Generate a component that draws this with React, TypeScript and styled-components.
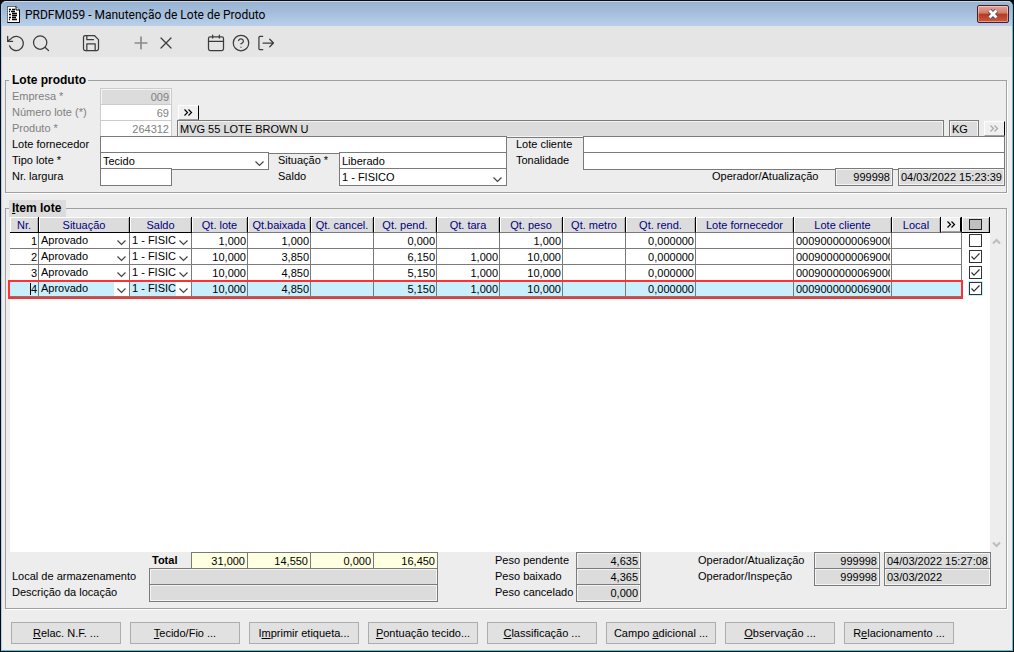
import React from "react";
import styled, { createGlobalStyle, css } from "styled-components";

const GlobalStyle = createGlobalStyle`
  * { box-sizing: border-box; }
  html, body { margin: 0; padding: 0; }
  body, button, input, select, table {
    font-family: "Liberation Sans", Arial, sans-serif;
    font-size: 11px;
    line-height: 14px;
    color: #000;
  }
`;

/* ---------- window frame ---------- */

const Frame = styled.div`
  min-height: 100vh;
  display: flex;
  background: #0a0a0a;
  padding: 1px;
`;

const Window = styled.main`
  flex: 1;
  min-width: 0;
  display: flex;
  flex-direction: column;
  background: #ededed;
  border: 1px solid #4cc4e6;
  border-left-color: #a9cdf0;
  border-top-color: #c8d8ea;
  border-radius: 5px 5px 0 0;
  overflow: hidden;
`;

const TitleBar = styled.header`
  height: 24px;
  display: flex;
  align-items: center;
  padding: 0 3px 0 5px;
  background: linear-gradient(#99b4d1, #a3bcda 40%, #b9d1ea);
`;

const Title = styled.h1`
  flex: 1;
  margin: 0 0 0 5px;
  padding-top: 2px;
  font: 400 12px/16px Roboto, "Segoe UI", sans-serif;
`;

const CloseButton = styled.button`
  width: 32px;
  height: 18px;
  padding: 0;
  display: flex;
  align-items: center;
  justify-content: center;
  border: 1px solid #4a1d22;
  border-radius: 2px;
  background: linear-gradient(#e3a396, #d07a6b 45%, #b9371f 50%, #cb5a43);
  box-shadow: inset 0 0 0 1px rgba(255, 255, 255, 0.4);
`;

const Toolbar = styled.div`
  height: 31px;
  display: flex;
  align-items: flex-start;
  padding: 4px 0 0 1px;
  background: #e5e5e5;
`;

const ToolButton = styled.button<{ $gapBefore?: boolean; $dim?: boolean }>`
  width: 25px;
  height: 26px;
  margin-left: ${(p) => (p.$gapBefore ? 25 : 0)}px;
  padding: 0 0 0 3px;
  border: 0;
  background: none;
  color: ${(p) => (p.$dim ? "#8a8a8a" : "#3c3c3c")};
  display: flex;
  align-items: center;
`;

const ToolIcon: React.FC<{ children: React.ReactNode }> = ({ children }) => (
  <svg width="20" height="20" viewBox="0 0 24 24" fill="none" stroke="currentColor" strokeWidth="1.5" strokeLinecap="round" strokeLinejoin="round" aria-hidden="true">
    {children}
  </svg>
);

const Body = styled.div`
  flex: 1;
  display: flex;
  flex-direction: column;
  padding: 15px 5px 6px 3px;
`;

/* ---------- groups and form parts ---------- */

const Group = styled.fieldset<{ $grow?: boolean }>`
  min-width: 0;
  margin: 0 0 7px;
  padding: 0 1px 8px 6px;
  border: 1px solid #a0a0a0;
  box-shadow: 1px 1px 0 #fff;
  ${(p) =>
    p.$grow &&
    css`
      flex: 1;
      display: flex;
      flex-direction: column;
      margin-bottom: 13px;
      padding: 0 4px 8px 4px;
    `}
`;

const Legend = styled.legend<{ $shaded?: boolean }>`
  height: ${(p) => (p.$shaded ? 17 : 16)}px;
  margin-left: ${(p) => (p.$shaded ? -1 : -3)}px;
  padding: 0 ${(p) => (p.$shaded ? 5 : 2)}px 0 3px;
  font-size: 12px;
  line-height: 16px;
  font-weight: 700;
  background: ${(p) => (p.$shaded ? "#dcdcdc" : "#ededed")};
`;

const Row = styled.div<{ $gap?: number }>`
  height: 16px;
  display: flex;
  align-items: flex-start;
  gap: ${(p) => p.$gap || 0}px;
`;

const Label = styled.label<{ $w: number; $indent?: number; $dim?: boolean; $bold?: boolean }>`
  flex: none;
  width: ${(p) => p.$w}px;
  padding-left: ${(p) => p.$indent || 0}px;
  line-height: 16px;
  white-space: nowrap;
  color: ${(p) => (p.$dim ? "#808080" : "#000")};
  font-weight: ${(p) => (p.$bold ? 700 : 400)};
`;

type Tone = "edit" | "read" | "total" | "off" | "offRead";

const tones: Record<Tone, string> = {
  edit: "background:#fff;border-color:#7a7a7a;",
  read: "background:#dcdcdc;border-color:#7a7a7a;box-shadow:inset 0 0 0 1px #f4f4f4;",
  total: "background:#ffffe1;border-color:#7a7a7a;",
  off: "background:#fff;border-color:#cccccc;color:#808080;",
  offRead: "background:#dcdcdc;border-color:#cccccc;color:#808080;box-shadow:inset 0 0 0 1px #f4f4f4;",
};

const Field = styled.input<{ $w?: number; $tone?: Tone; $right?: boolean }>`
  ${(p) => (p.$w ? `flex: none; width: ${p.$w}px;` : "flex: 1; min-width: 0;")}
  height: 18px;
  margin: 0;
  padding: 0 2px;
  border: 1px solid;
  border-radius: 0;
  outline: 0;
  text-align: ${(p) => (p.$right ? "right" : "left")};
  ${(p) => tones[p.$tone || "edit"]}
`;

const Totals = styled.div`
  display: flex;
  input + input {
    margin-left: -1px;
  }
`;

const SelectBox = styled.span<{ $w?: number; $bare?: boolean }>`
  flex: none;
  display: grid;
  grid-template-columns: minmax(0, 1fr) ${(p) => (p.$bare ? 15 : 18)}px;
  width: ${(p) => (p.$w ? p.$w + "px" : "100%")};
  height: ${(p) => (p.$bare ? 15 : 18)}px;
  border: ${(p) => (p.$bare ? "0" : "1px solid #7a7a7a")};
  background: #fff;
`;

const NativeSelect = styled.select<{ $selected?: boolean }>`
  appearance: none;
  grid-area: 1 / 1;
  min-width: 0;
  height: 100%;
  margin: 0;
  padding: 0 0 1px 2px;
  border: 0;
  border-radius: 0;
  outline: 0;
  background: ${(p) => (p.$selected ? "#c9effd" : "#fff")};
  overflow: hidden;
  text-overflow: clip;
`;

const Arrow = styled.svg`
  grid-area: 1 / 2;
  align-self: end;
  justify-self: center;
  margin-bottom: 2px;
  pointer-events: none;
`;

const Chevron = () => (
  <Arrow width="9" height="7" viewBox="0 0 9 7" fill="none" stroke="#444" strokeWidth="1.2" aria-hidden="true">
    <path d="M0.5 1.5 4.5 5.5 8.5 1.5" />
  </Arrow>
);

const Choice: React.FC<{ id?: string; label?: string; value: string; w?: number; bare?: boolean; selected?: boolean }> = (p) => (
  <SelectBox $w={p.w} $bare={p.bare}>
    <NativeSelect id={p.id} aria-label={p.label} $selected={p.selected} defaultValue={p.value}>
      <option>{p.value}</option>
    </NativeSelect>
    <Chevron />
  </SelectBox>
);

const MoreButton = styled.button<{ $flush?: boolean }>`
  flex: none;
  width: ${(p) => (p.$flush ? "100%" : "21px")};
  height: 15px;
  margin-top: ${(p) => (p.$flush ? 0 : 1)}px;
  padding: 0;
  display: flex;
  align-items: center;
  justify-content: center;
  background: #f0f0f0;
  border: 1px solid;
  border-color: #fff #000 #a0a0a0 #fff;
  color: #000;
  &:disabled {
    color: #a8a8a8;
  }
`;

const DoubleChevron = () => (
  <svg width="9" height="7" viewBox="0 0 9 7" fill="none" stroke="currentColor" strokeWidth="1.2" aria-hidden="true">
    <path d="M0.5 0.5 3.5 3.5 0.5 6.5M4.5 0.5 7.5 3.5 4.5 6.5" />
  </svg>
);

const Spacer = styled.span<{ $w?: number }>`
  flex: ${(p) => (p.$w ? `0 0 ${p.$w}px` : "1")};
`;

/* ---------- item grid ---------- */

const GridArea = styled.div`
  flex: 1;
  display: flex;
  min-height: 335px;
`;

const GridPane = styled.div`
  position: relative;
  flex: 1;
  min-width: 0;
  background: linear-gradient(#ededed 16px, #fff 16px);
`;

const Scroll = styled.div`
  width: 12px;
  display: flex;
  flex-direction: column;
  justify-content: space-between;
  align-items: center;
  padding: 21px 0 4px;
`;

const Grid = styled.table`
  width: 100%;
  table-layout: fixed;
  border-collapse: separate;
  border-spacing: 0;
`;

const Head = styled.th<{ $tight?: boolean }>`
  height: 16px;
  padding: 0;
  font-weight: 400;
  line-height: 14px;
  white-space: nowrap;
  color: #000080;
  background: #dcdcdc;
  border-right: 1px solid #000;
  border-bottom: 1px solid ${(p) => (p.$tight ? "#000" : "#7a7a7a")};
  box-shadow: inset 1px 1px 0 #fff, inset -1px 0 0 #b4b4b4;
`;

const Swatch = styled.span`
  display: block;
  width: 13px;
  height: 11px;
  margin: 1px auto;
  border: 1px solid #222;
  background: #c0c0c0;
`;

const Cell = styled.td<{ $selected?: boolean; $left?: boolean; $flush?: boolean }>`
  height: 16px;
  padding: ${(p) => (p.$flush ? "0" : "1px 1px 0 2px")};
  line-height: 14px;
  text-align: ${(p) => (p.$left ? "left" : "right")};
  white-space: nowrap;
  overflow: hidden;
  text-overflow: clip;
  background: ${(p) => (p.$selected ? "#c9effd" : "#fff")};
  border-right: 1px solid #7a7a7a;
  border-bottom: 1px solid #7a7a7a;
  vertical-align: top;
`;

const Clip = styled.div`
  overflow: hidden;
`;

const Caret = styled.span`
  border-left: 1px solid #000;
`;

const CheckCell = styled.td`
  height: 16px;
  padding: 0;
  vertical-align: top;
`;

const CheckBox = styled.label<{ $selected?: boolean }>`
  display: grid;
  width: 13px;
  height: 13px;
  margin: 1px 0 0 7px;
  background: #fff;
  box-shadow: 0 0 0 1px ${(p) => (p.$selected ? "#c9effd" : "#fff")};
  input,
  svg {
    grid-area: 1 / 1;
    margin: 0;
  }
  svg {
    pointer-events: none;
    visibility: hidden;
  }
  input {
    appearance: none;
    width: 13px;
    height: 13px;
    border: 1px solid #333;
  }
  input:checked + svg {
    visibility: visible;
  }
`;

const RowMarker = styled.div`
  position: absolute;
  top: 63px;
  left: -2px;
  right: 27px;
  height: 19px;
  border: 2px solid #fa3232;
  pointer-events: none;
`;

const Summary = styled.div`
  display: flex;
  justify-content: space-between;
  padding: 0 11px 0 2px;
`;

const Actions = styled.div`
  display: flex;
  gap: 9px;
  padding-left: 6px;
`;

const ActionButton = styled.button`
  width: 110px;
  height: 22px;
  padding: 0;
  border: 1px solid #adadad;
  background: #e1e1e1;
  white-space: nowrap;
`;

/* ---------- data ---------- */

type Col = { title: string; w?: number; tight?: boolean };

const columns: Col[] = [
  { title: "Nr.", w: 29, tight: true },
  { title: "Situação", w: 91, tight: true },
  { title: "Saldo", w: 62, tight: true },
  { title: "Qt. lote", w: 56 },
  { title: "Qt.baixada", w: 63 },
  { title: "Qt. cancel.", w: 63 },
  { title: "Qt. pend.", w: 63 },
  { title: "Qt. tara", w: 63 },
  { title: "Qt. peso", w: 63 },
  { title: "Qt. metro", w: 63 },
  { title: "Qt. rend.", w: 70 },
  { title: "Lote fornecedor" },
  { title: "Lote cliente", w: 98 },
  { title: "Local", w: 49 },
];

const items = [
  { nr: 1, q: ["1,000", "1,000", "", "0,000", "", "1,000", "", "0,000000"], on: false },
  { nr: 2, q: ["10,000", "3,850", "", "6,150", "1,000", "10,000", "", "0,000000"], on: true },
  { nr: 3, q: ["10,000", "4,850", "", "5,150", "1,000", "10,000", "", "0,000000"], on: true },
  { nr: 4, q: ["10,000", "4,850", "", "5,150", "1,000", "10,000", "", "0,000000"], on: true },
];
const current = 4;

const totals = [
  { name: "Total Qt. lote", value: "31,000", w: 57 },
  { name: "Total Qt. baixada", value: "14,550", w: 64 },
  { name: "Total Qt. cancel.", value: "0,000", w: 64 },
  { name: "Total Qt. pend.", value: "16,450", w: 65 },
];

const weights = [
  ["Peso pendente", "4,635"],
  ["Peso baixado", "4,365"],
  ["Peso cancelado", "0,000"],
];

const actions = [
  ["", "R", "elac. N.F. ..."],
  ["", "T", "ecido/Fio ..."],
  ["I", "m", "primir etiqueta..."],
  ["", "P", "ontuação tecido..."],
  ["", "C", "lassificação ..."],
  ["Campo ", "a", "dicional ..."],
  ["", "O", "bservação ..."],
  ["R", "e", "lacionamento ..."],
];

export default function App() {
  return (
    <Frame>
      <GlobalStyle />
      <Window>
        <TitleBar>
          <svg width="13" height="17" viewBox="0 0 13 17" aria-hidden="true">
            <path d="M0.5 0.5H9L12.5 4V16.5H0.5Z" fill="#fff" stroke="#000" strokeDasharray="1 1" />
            <path d="M12.500 4V16.500H0.500M9 0.500V4H12.500" fill="none" stroke="#000" />
            <path d="M2 3.500h2M5 3.500h3M2 5.500h1M4 5.500h4M2 8.500h2M5 7.500h5M5 9.500h5M2 11.500h2M5 11.500h4M2 13.500h1M5 13.500h5" stroke="#000" strokeWidth="1.3" />
          </svg>
          <Title>PRDFM059 - Manutenção de Lote de Produto</Title>
          <CloseButton aria-label="Fechar">
            <svg width="12" height="10" viewBox="0 0 12 10" aria-hidden="true">
              <path d="M2.500 1.500 9.500 8.500M9.500 1.500 2.500 8.500" stroke="#4d4d5a" strokeWidth="4.500" />
              <path d="M2.500 1.500 9.500 8.500M9.500 1.500 2.500 8.500" stroke="#fff" strokeWidth="2.800" />
            </svg>
          </CloseButton>
        </TitleBar>

        <Toolbar role="toolbar">
          <ToolButton aria-label="Desfazer">
            <ToolIcon>
              <path d="M2 4v6h6" />
              <path d="M4.300 15.500a8.500 8.500 0 1 0 2-9L2 10" />
            </ToolIcon>
          </ToolButton>
          <ToolButton aria-label="Pesquisar">
            <ToolIcon>
              <circle cx="11" cy="11.500" r="8" />
              <path d="M16.800 17.200 21 21" />
            </ToolIcon>
          </ToolButton>
          <ToolButton aria-label="Salvar" $gapBefore>
            <ToolIcon>
              <path d="M19 21H5a2 2 0 0 1-2-2V5a2 2 0 0 1 2-2h11l5 5v11a2 2 0 0 1-2 2z" />
              <path d="M17 21v-8H7v8M7 3v5h8" />
            </ToolIcon>
          </ToolButton>
          <ToolButton aria-label="Incluir" $gapBefore $dim>
            <ToolIcon>
              <path d="M12 5v14M5 12h14" strokeWidth="2" />
            </ToolIcon>
          </ToolButton>
          <ToolButton aria-label="Excluir">
            <ToolIcon>
              <path d="M18 6 6 18M6 6l12 12" />
            </ToolIcon>
          </ToolButton>
          <ToolButton aria-label="Calendário" $gapBefore>
            <ToolIcon>
              <rect x="3" y="4.500" width="18" height="16.500" rx="2" />
              <path d="M16 2.500v3.500M8 2.500v3.500M3 10h18" />
            </ToolIcon>
          </ToolButton>
          <ToolButton aria-label="Ajuda">
            <ToolIcon>
              <circle cx="12" cy="12" r="9.300" />
              <path d="M9.100 9a3 3 0 0 1 5.800 1c0 2-3 3-3 3M12 17h.01" />
            </ToolIcon>
          </ToolButton>
          <ToolButton aria-label="Sair">
            <ToolIcon>
              <path d="M8 20H5a1.500 1.500 0 0 1-1.500-1.500v-13A1.500 1.500 0 0 1 5 4h3M16.500 16.500 21 12l-4.500-4.500M21 12H8.500" />
            </ToolIcon>
          </ToolButton>
        </Toolbar>

        <Body>
          <Group>
            <Legend>Lote produto</Legend>
            <Row>
              <Label $w={88} $dim htmlFor="empresa">Empresa *</Label>
              <Field id="empresa" $w={72} $tone="offRead" $right readOnly defaultValue="009" />
            </Row>
            <Row $gap={6}>
              <Row>
                <Label $w={88} $dim htmlFor="numero">Número lote (*)</Label>
                <Field id="numero" $w={72} $tone="off" $right readOnly defaultValue="69" />
              </Row>
              <MoreButton aria-label="Pesquisar lote"><DoubleChevron /></MoreButton>
            </Row>
            <Row $gap={5}>
              <Row>
                <Label $w={88} $dim htmlFor="produto">Produto *</Label>
                <Field id="produto" $w={72} $tone="off" $right readOnly defaultValue="264312" />
              </Row>
              <Field aria-label="Descrição do produto" $tone="read" readOnly defaultValue="MVG 55 LOTE BROWN U" />
              <Field aria-label="Unidade" $w={30} $tone="read" readOnly defaultValue="KG" />
              <MoreButton disabled aria-label="Pesquisar unidade"><DoubleChevron /></MoreButton>
            </Row>
            <Row>
              <Label $w={88} htmlFor="fornecedor">Lote fornecedor</Label>
              <Field id="fornecedor" $w={407} />
              <Label $w={76} $indent={9} htmlFor="cliente">Lote cliente</Label>
              <Field id="cliente" />
            </Row>
            <Row>
              <Label $w={88} htmlFor="tipo">Tipo lote *</Label>
              <Choice id="tipo" w={169} value="Tecido" />
              <Label $w={70} $indent={9} htmlFor="situacao">Situação *</Label>
              <Field id="situacao" $w={168} defaultValue="Liberado" />
              <Label $w={76} $indent={9} htmlFor="tonalidade">Tonalidade</Label>
              <Field id="tonalidade" />
            </Row>
            <Row>
              <Label $w={88} htmlFor="largura">Nr. largura</Label>
              <Field id="largura" $w={72} />
              <Spacer $w={97} />
              <Label $w={70} $indent={9} htmlFor="saldo">Saldo</Label>
              <Choice id="saldo" w={168} value="1 - FISICO" />
              <Spacer />
              <Label $w={123} htmlFor="operador">Operador/Atualização</Label>
              <Field id="operador" $w={58} $tone="read" $right readOnly defaultValue="999998" />
              <Spacer $w={5} />
              <Field aria-label="Data da atualização" $w={107} $tone="read" readOnly defaultValue="04/03/2022 15:23:39" />
            </Row>
          </Group>

          <Group $grow>
            <Legend $shaded><u>I</u>tem lote</Legend>
            <GridArea>
              <GridPane>
                <Grid>
                  <colgroup>
                    {columns.map((c) => <col key={c.title} width={c.w} />)}
                    <col width={21} />
                    <col width={28} />
                  </colgroup>
                  <thead>
                    <tr>
                      {columns.map((c) => <Head key={c.title} scope="col" $tight={c.tight}>{c.title}</Head>)}
                      <Head><MoreButton $flush aria-label="Pesquisar local"><DoubleChevron /></MoreButton></Head>
                      <Head $tight aria-label="Marcar"><Swatch /></Head>
                    </tr>
                  </thead>
                  <tbody>
                    {items.map((it) => {
                      const sel = it.nr === current;
                      return (
                        <tr key={it.nr}>
                          <Cell $selected={sel}>{sel ? <Caret>{it.nr}</Caret> : it.nr}</Cell>
                          <Cell $flush><Choice bare selected={sel} label={`Situação do item ${it.nr}`} value="Aprovado" /></Cell>
                          <Cell $flush><Choice bare selected={sel} label={`Saldo do item ${it.nr}`} value="1 - FISIC" /></Cell>
                          {it.q.map((v, i) => <Cell key={i} $selected={sel}>{v}</Cell>)}
                          <Cell $selected={sel} />
                          <Cell $selected={sel} $left><Clip>0009000000069000</Clip></Cell>
                          <Cell $selected={sel} colSpan={2} />
                          <CheckCell>
                            <CheckBox $selected={sel}>
                              <input type="checkbox" aria-label={`Marcar item ${it.nr}`} defaultChecked={it.on} />
                              <svg width="13" height="13" viewBox="0 0 13 13" fill="none" stroke="#333" strokeWidth="1.200" aria-hidden="true">
                                <path d="M2.500 6.500 5 9.200 10.500 3.500" />
                              </svg>
                            </CheckBox>
                          </CheckCell>
                        </tr>
                      );
                    })}
                  </tbody>
                </Grid>
                <RowMarker />
              </GridPane>
              <Scroll>
                <svg width="9" height="7" viewBox="0 0 9 7" fill="none" stroke="#bdbdbd" strokeWidth="2" aria-hidden="true">
                  <path d="M1 5.500 4.500 2 8 5.500" />
                </svg>
                <svg width="9" height="7" viewBox="0 0 9 7" fill="none" stroke="#bdbdbd" strokeWidth="2" aria-hidden="true">
                  <path d="M1 1.500 4.500 5 8 1.500" />
                </svg>
              </Scroll>
            </GridArea>
            <Summary>
              <div>
                <Row>
                  <Label as="span" $w={179} $indent={140} $bold>Total</Label>
                  <Totals>
                    {totals.map((t) => (
                      <Field key={t.name} aria-label={t.name} $w={t.w} $tone="total" $right readOnly defaultValue={t.value} />
                    ))}
                  </Totals>
                </Row>
                <Row>
                  <Label $w={137} htmlFor="local">Local de armazenamento</Label>
                  <Field id="local" $w={289} $tone="read" readOnly />
                </Row>
                <Row>
                  <Label $w={137} htmlFor="locacao">Descrição da locação</Label>
                  <Field id="locacao" $w={289} $tone="read" readOnly />
                </Row>
              </div>
              <div>
                {weights.map(([name, value], i) => (
                  <Row key={name}>
                    <Label $w={81} htmlFor={`peso${i}`}>{name}</Label>
                    <Field id={`peso${i}`} $w={65} $tone="read" $right readOnly defaultValue={value} />
                  </Row>
                ))}
              </div>
              <div>
                <Row>
                  <Label $w={116} htmlFor="opAtual">Operador/Atualização</Label>
                  <Field id="opAtual" $w={66} $tone="read" $right readOnly defaultValue="999998" />
                  <Spacer $w={4} />
                  <Field aria-label="Data da atualização do item" $w={107} $tone="read" readOnly defaultValue="04/03/2022 15:27:08" />
                </Row>
                <Row>
                  <Label $w={116} htmlFor="opInsp">Operador/Inspeção</Label>
                  <Field id="opInsp" $w={66} $tone="read" $right readOnly defaultValue="999998" />
                  <Spacer $w={4} />
                  <Field aria-label="Data da inspeção" $w={107} $tone="read" readOnly defaultValue="03/03/2022" />
                </Row>
              </div>
            </Summary>
          </Group>

          <Actions>
            {actions.map(([before, key, after]) => (
              <ActionButton key={before + key + after}>{before}<u>{key}</u>{after}</ActionButton>
            ))}
          </Actions>
        </Body>
      </Window>
    </Frame>
  );
}
